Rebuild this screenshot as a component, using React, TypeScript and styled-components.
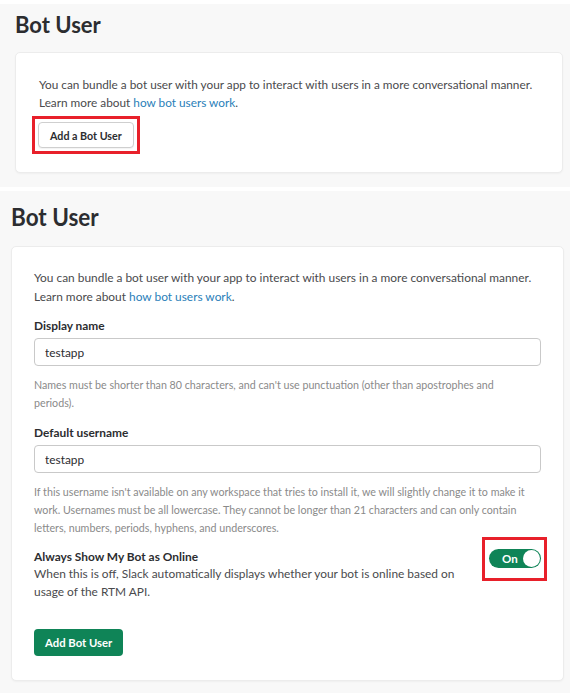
import styled, { createGlobalStyle } from "styled-components"

const GlobalStyle = createGlobalStyle`
    body {
        margin: 0;
        background: #ffffff;
        font-family: Lato, "Open Sans", sans-serif;
        -webkit-font-smoothing: antialiased;
    }
`

export default function App() {
    return (
        <>
            <GlobalStyle />
            <CollapsedPanel>
                <SmallTitle>Bot User</SmallTitle>
                <SmallCard>
                    <SmallIntro>
                        You can bundle a bot user with your app to interact with users in a more conversational manner.
                        <br />
                        Learn more about <Link href="#">how bot users work</Link>.
                    </SmallIntro>
                    <ButtonHighlight>
                        <OutlineButton>Add a Bot User</OutlineButton>
                    </ButtonHighlight>
                </SmallCard>
            </CollapsedPanel>

            <ExpandedPanel>
                <Title>Bot User</Title>
                <Card>
                    <Intro>
                        You can bundle a bot user with your app to interact with users in a more conversational manner.
                        <br />
                        Learn more about <Link href="#">how bot users work</Link>.
                    </Intro>

                    <FieldLabel>Display name</FieldLabel>
                    <TextInput defaultValue="testapp" />
                    <Hint>
                        Names must be shorter than 80 characters, and can't use punctuation (other than apostrophes and
                        <br />
                        periods).
                    </Hint>

                    <FieldLabel>Default username</FieldLabel>
                    <TextInput defaultValue="testapp" />
                    <Hint>
                        If this username isn't available on any workspace that tries to install it, we will slightly change
                        it to make it
                        <br />
                        work. Usernames must be all lowercase. They cannot be longer than 21 characters and can only contain
                        <br />
                        letters, numbers, periods, hyphens, and underscores.
                    </Hint>

                    <SettingRow>
                        <SettingText>
                            <SettingLabel>Always Show My Bot as Online</SettingLabel>
                            <SettingDescription>
                                When this is off, Slack automatically displays whether your bot is online based on
                                <br />
                                usage of the RTM API.
                            </SettingDescription>
                        </SettingText>
                        <ToggleHighlight>
                            <Toggle>
                                <ToggleText>On</ToggleText>
                                <ToggleKnob />
                            </Toggle>
                        </ToggleHighlight>
                    </SettingRow>

                    <PrimaryButton>Add Bot User</PrimaryButton>
                </Card>
            </ExpandedPanel>
        </>
    )
}

const Panel = styled.section`
    margin-top: 4px;
    background: #f8f8f8;
    display: flex;
    flex-direction: column;
`

const CollapsedPanel = styled(Panel)`
    padding: 7px 7px 14px 15px;
`

const ExpandedPanel = styled(Panel)`
    padding: 11px 6px 12px 11px;
`

const SmallTitle = styled.h2`
    margin: 0 0 13px;
    font-size: 22px;
    line-height: 28px;
    font-weight: 700;
    color: #2c2d30;
`

const Title = styled.h2`
    margin: 0 0 14px;
    font-size: 22.5px;
    line-height: 30px;
    font-weight: 700;
    color: #2c2d30;
    transform: scaleY(1.1);
`

const CardBase = styled.div`
    background: #ffffff;
    border: 1px solid #ececec;
    border-radius: 5px;
    box-shadow: 0 1px 2px rgba(0, 0, 0, 0.04);
    display: flex;
    flex-direction: column;
    align-items: flex-start;
`

const SmallCard = styled(CardBase)`
    padding: 23px 23px 18px 23px;
`

const Card = styled(CardBase)`
    padding: 21px 22px 24px 22px;
    align-items: stretch;
`

const SmallIntro = styled.p`
    margin: 0;
    font-size: 11.8px;
    line-height: 18px;
    color: #4a4a4d;
`

const Intro = styled.p`
    margin: 0;
    font-size: 11.9px;
    line-height: 19px;
    color: #4a4a4d;
`

const Link = styled.a`
    color: #2a80b9;
    text-decoration: none;
`

const ButtonHighlight = styled.div`
    margin: 4px 0 0 -7px;
    padding: 3px;
    border: 3px solid #e8202a;
    display: inline-flex;
`

const OutlineButton = styled.button`
    height: 26px;
    padding: 0 11px;
    background: #ffffff;
    border: 1px solid #cfcfcf;
    border-radius: 4px;
    font-family: inherit;
    font-size: 10.7px;
    font-weight: 700;
    color: #2c2d30;
    box-shadow: 0 1px 1px rgba(0, 0, 0, 0.05);
`

const FieldLabel = styled.label`
    margin-top: 10px;
    font-size: 11.9px;
    line-height: 19px;
    font-weight: 700;
    color: #2c2d30;
`

const TextInput = styled.input`
    margin-top: 3px;
    height: 28px;
    box-sizing: border-box;
    padding: 0 10px;
    border: 1px solid #c9c9c9;
    border-radius: 4px;
    font-family: inherit;
    font-size: 11.9px;
    color: #2c2d30;
    outline: none;
`

const Hint = styled.p`
    margin: 10px 0 0;
    font-size: 10.7px;
    line-height: 18px;
    color: #8a8a8a;
    white-space: nowrap;

    & + ${FieldLabel} {
        margin-top: 11px;
    }
`

const SettingRow = styled.div`
    margin-top: 11px;
    display: flex;
    justify-content: space-between;
    align-items: flex-start;
`

const SettingText = styled.div`
    display: flex;
    flex-direction: column;
`

const SettingLabel = styled.div`
    font-size: 11.9px;
    line-height: 17px;
    font-weight: 700;
    color: #2c2d30;
`

const SettingDescription = styled.div`
    font-size: 11.9px;
    line-height: 18px;
    color: #4a4a4d;
`

const ToggleHighlight = styled.div`
    margin: -11px -6px 0 0;
    padding: 9px 3px 10px 4px;
    border: 3px solid #e8202a;
    display: flex;
`

const Toggle = styled.div`
    width: 52px;
    height: 19px;
    box-sizing: border-box;
    padding: 1px;
    border-radius: 10px;
    background: #0f8457;
    display: flex;
    align-items: center;
    justify-content: space-between;
`

const ToggleText = styled.span`
    padding-left: 12px;
    font-size: 11.5px;
    font-weight: 700;
    color: #ffffff;
`

const ToggleKnob = styled.span`
    width: 17px;
    height: 17px;
    border-radius: 50%;
    background: #ffffff;
`

const PrimaryButton = styled.button`
    align-self: flex-start;
    margin-top: 28px;
    height: 27px;
    padding: 0 11px;
    background: #0f8457;
    border: none;
    border-radius: 4px;
    font-family: inherit;
    font-size: 11.3px;
    font-weight: 700;
    color: #ffffff;
`
